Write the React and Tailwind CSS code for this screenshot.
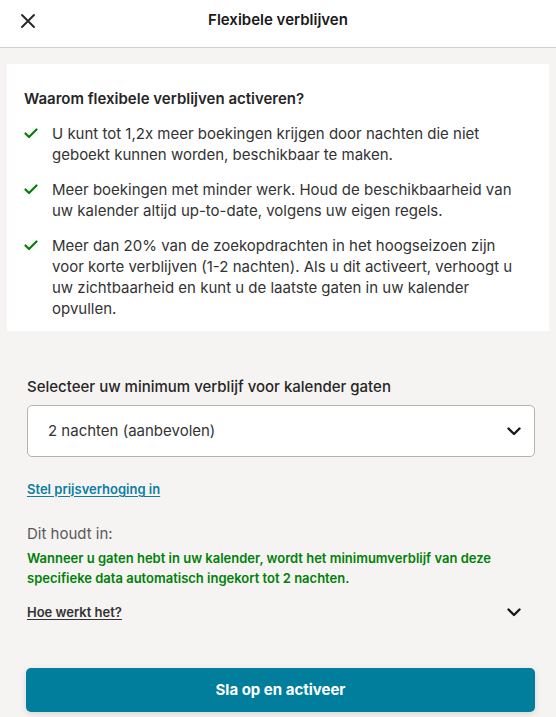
const font = { fontFamily: 'Inter, "Noto Sans", sans-serif' }

function Check() {
  return (
    <svg width="14" height="11" viewBox="0 0 14 11" className="mt-[5px] shrink-0">
      <path d="M1.5 5.5 L5 9 L12.5 1.5" fill="none" stroke="#008009" strokeWidth="2.2" strokeLinecap="round" strokeLinejoin="round" />
    </svg>
  )
}

function Chevron() {
  return (
    <svg width="14" height="9" viewBox="0 0 14 9">
      <path d="M1.5 1.5 L7 7 L12.5 1.5" fill="none" stroke="#1a1a1a" strokeWidth="2.4" strokeLinecap="round" strokeLinejoin="round" />
    </svg>
  )
}

const reasons = [
  'U kunt tot 1,2x meer boekingen krijgen door nachten die niet geboekt kunnen worden, beschikbaar te maken.',
  'Meer boekingen met minder werk. Houd de beschikbaarheid van uw kalender altijd up-to-date, volgens uw eigen regels.',
  'Meer dan 20% van de zoekopdrachten in het hoogseizoen zijn voor korte verblijven (1-2 nachten). Als u dit activeert, verhoogt u uw zichtbaarheid en kunt u de laatste gaten in uw kalender opvullen.',
]

export default function App() {
  return (
    <div style={font} className="w-[556px] h-[717px] bg-[#f5f4f2] text-[#1a1a1a] overflow-hidden">
      {/* header */}
      <div className="relative h-[48px] bg-white border-b border-[#cfcfcf] flex items-center justify-center">
        <button className="absolute left-[20px] top-[13px]">
          <svg width="16" height="16" viewBox="0 0 16 16">
            <path d="M2 2 L14 14 M14 2 L2 14" stroke="#262626" strokeWidth="1.9" strokeLinecap="round" />
          </svg>
        </button>
        <h1 className="text-[15px] font-semibold -mt-[6px]">Flexibele verblijven</h1>
      </div>

      {/* reasons card */}
      <div className="mx-[7px] mt-[16px] bg-white pl-[17px] pr-[20px] pt-[24px] h-[267px]">
        <h2 className="text-[15px] font-semibold leading-[22px] text-[#262626]">Waarom flexibele verblijven activeren?</h2>
        <ul className="mt-[13px] flex flex-col gap-[14px]">
          {reasons.map((r, i) => (
            <li key={i} className="flex gap-[14px]">
              <Check />
              <p className="text-[15px] leading-[21px] text-[#333]">{r}</p>
            </li>
          ))}
        </ul>
      </div>

      {/* settings */}
      <div className="pl-[27px] pr-[21px] pt-[45px]">
        <label className="block text-[15px] font-medium leading-[22px] text-[#262626]">
          Selecteer uw minimum verblijf voor kalender gaten
        </label>
        <div className="mt-[7px] h-[52px] bg-white border border-[#b5b3b0] rounded-[5px] flex items-center justify-between pl-[20px] pr-[13px]">
          <span className="text-[15px] text-[#333]">2 nachten (aanbevolen)</span>
          <Chevron />
        </div>

        <a className="block mt-[23px] text-[13px] font-semibold leading-[18px] text-[#0a7ea4] underline underline-offset-2">
          Stel prijsverhoging in
        </a>

        <p className="mt-[25px] text-[15px] leading-[22px] text-[#595959]">Dit houdt in:</p>
        <p className="mt-[3px] text-[13px] font-semibold leading-[20px] text-[#008009]">
          Wanneer u gaten hebt in uw kalender, wordt het minimumverblijf van deze specifieke data automatisch ingekort tot 2 nachten.
        </p>

        <div className="mt-[14px] flex items-center justify-between pr-[14px]">
          <span className="text-[13px] font-semibold leading-[20px] text-[#333] underline underline-offset-2">Hoe werkt het?</span>
          <Chevron />
        </div>

        <button className="mt-[46px] -ml-px w-[509px] h-[44px] rounded-[5px] bg-[#007e9b] text-white text-[15px] font-bold shadow-[0_2px_6px_rgba(0,0,0,0.12)]">
          Sla op en activeer
        </button>
      </div>
    </div>
  )
}
